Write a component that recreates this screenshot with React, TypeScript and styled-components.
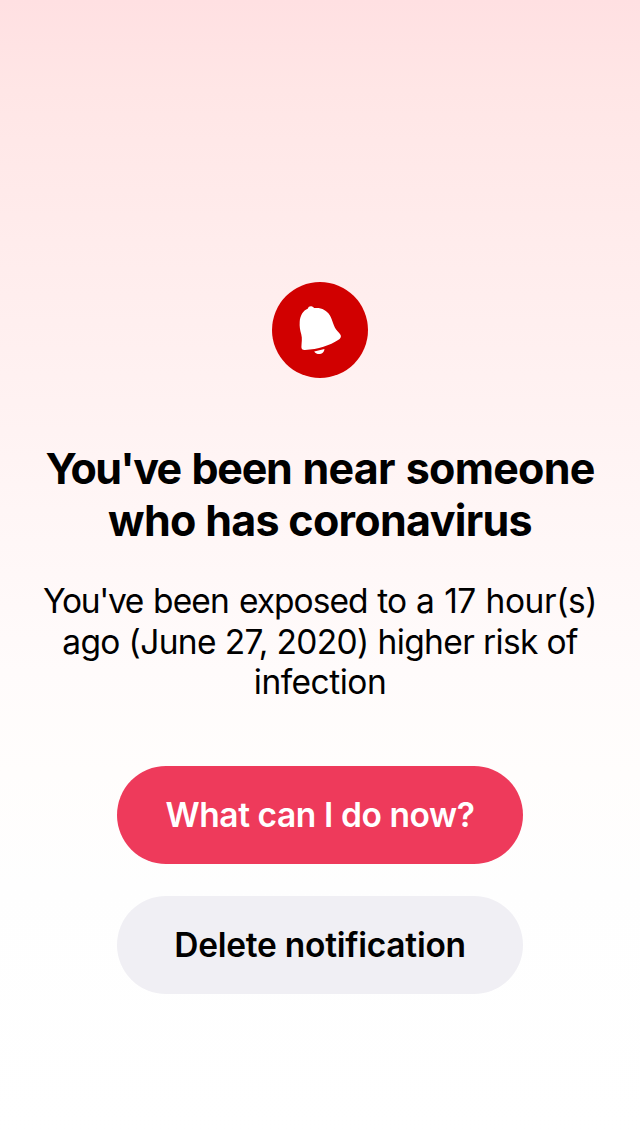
import React from 'react';
import styled, { createGlobalStyle } from 'styled-components';

const GlobalStyle = createGlobalStyle`
  * { box-sizing: border-box; }
  body { margin: 0; font-family: Inter, "Liberation Sans", sans-serif; color: #000; }
`;

const Screen = styled.main`
  display: flex;
  flex-direction: column;
  align-items: center;
  height: 1136px;
  padding-top: 282px;
  overflow: hidden;
  background: linear-gradient(180deg, #ffe0e2 0%, #ffe6e6 8%, #ffebeb 19%, #fff1f1 33%, #fff6f6 45%, #fffbfb 59%, #fffdfc 68%, #fefefe 78%, #ffffff 100%);
`;

const Badge = styled.div`
  width: 96px;
  height: 96px;
  border-radius: 50%;
  background: #d10000;
  svg { display: block; }
`;

const Line = styled.span<{ $spacing: number; $word?: number }>`
  display: block;
  white-space: nowrap;
  letter-spacing: ${p => p.$spacing}px;
  word-spacing: ${p => p.$word ?? 0}px;
`;

const Tight = styled.span<{ $spacing: number }>`
  letter-spacing: ${p => p.$spacing}px;
`;

const Title = styled.h1`
  margin: 64px 0 0;
  font-size: 43px;
  line-height: 52px;
  font-weight: 700;
  text-align: center;
`;

const Message = styled.p`
  margin: 35px 0 0;
  font-size: 33.5px;
  line-height: 40.5px;
  text-align: center;
`;

const Actions = styled.div`
  display: flex;
  flex-direction: column;
  gap: 32px;
  margin-top: 63px;
`;

const Button = styled.button<{ $primary?: boolean }>`
  width: 406px;
  height: 98px;
  padding: 0;
  border: 0;
  border-radius: 49px;
  background: ${p => (p.$primary ? '#ee3a5b' : '#f0eff4')};
  color: ${p => (p.$primary ? '#fff' : '#000')};
  font: 600 33.5px/40px Inter, "Liberation Sans", sans-serif;
`;

export default function App() {
  return (
    <>
      <GlobalStyle />
      <Screen>
        <Badge>
          <svg width="96" height="96" viewBox="0 0 96 96" fill="#fff">
            <path d="M36 26.600C36.300 24.800 37.600 24.100 39.300 24.300C40.600 24.500 41.600 25.200 42.200 26.100C49 25.300 54.500 28 57.800 33.200C61 38.500 60.800 44 65.800 49.400C67.500 51.200 68.800 52.600 68.900 54C69 55.600 68.200 56.600 66.500 57.700C58 63.500 46 67.300 33 67.900C30.500 68 29.400 67.300 29.400 65C29.600 60 30.400 56.500 29.300 52.500C28 48 27.400 44.500 27.700 40C28.100 33.500 31 28.800 36 26.600Z" />
            <path d="M42.200 69.400L52.500 67C52.100 69.800 50.500 71.600 48 72C46 72.300 43.500 71.500 42.200 69.400Z" />
          </svg>
        </Badge>
        <Title>
          <Line $spacing={-0.75} $word={1.5}>
            <Tight $spacing={-1.65}>You've</Tight> <Tight $spacing={-1.25}>been</Tight> near someone
          </Line>
          <Line $spacing={-0.7}>who has coronavirus</Line>
        </Title>
        <Message>
          <Line $spacing={-0.63} $word={1.2}>
            <Tight $spacing={-1.3}>You've</Tight> <Tight $spacing={-0.9}>been</Tight> <Tight $spacing={-0.95}>exposed to</Tight> a 17 <Tight $spacing={-0.45}>hour(s)</Tight>
          </Line>
          <Line $spacing={-0.63}>ago (June 27, 2020) higher risk of</Line>
          <Line $spacing={-0.5}>infection</Line>
        </Message>
        <Actions>
          <Button $primary><Line $spacing={-0.4}>What can I do now?</Line></Button>
          <Button><Line $spacing={-0.25}>Delete notification</Line></Button>
        </Actions>
      </Screen>
    </>
  );
}
